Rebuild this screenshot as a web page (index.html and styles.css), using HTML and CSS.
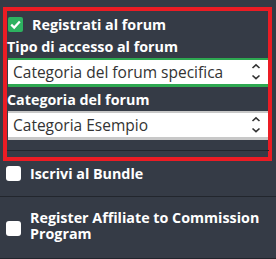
FILE: index.html
```html
<!DOCTYPE html>
<html>
<head>
	<title>Forum</title>
	<meta charset="utf-8">
	<link rel="stylesheet" href="styles.css">
</head>
<body>
	<div class="box">
		<div class="check-row first">
			<span class="check on">
				<svg width="15" height="15" viewBox="0 0 15 15"><path d="M3.2 7.6 L6.2 10.6 L11.8 4.4" fill="none" stroke="#fff" stroke-width="2.2"/></svg>
			</span>
			<span class="label">Registrati al forum</span>
		</div>
		<div class="field-label">Tipo di accesso al forum</div>
		<div class="select green">
			<span>Categoria del forum specifica</span>
			<svg class="arrows" width="10" height="18" viewBox="0 0 10 18"><path d="M1.5 5 L5 1.8 L8.5 5 M1.5 12.5 L5 15.7 L8.5 12.5" fill="none" stroke="#333" stroke-width="1.6"/></svg>
		</div>
		<div class="field-label">Categoria del forum</div>
		<div class="select grey">
			<span>Categoria Esempio</span>
			<svg class="arrows" width="10" height="18" viewBox="0 0 10 18"><path d="M1.5 5 L5 1.8 L8.5 5 M1.5 12.5 L5 15.7 L8.5 12.5" fill="none" stroke="#333" stroke-width="1.6"/></svg>
		</div>
		<div class="rule"></div>
	</div>
	<div class="option">
		<span class="check"></span>
		<span class="label">Iscrivi al Bundle</span>
	</div>
	<div class="option two">
		<span class="check"></span>
		<span class="label">Register Affiliate to Commission Program</span>
	</div>
</body>
</html>
```

FILE: styles.css
```css
	body{
		margin: 0;
		background: #353b46;
		font-family: "Open Sans", "Noto Sans", sans-serif;
		color: #fff;
	}
	.box{
		margin: 7px 4px 0 3px;
		border: 4px solid #ec1c24;
		padding: 0 0 6px 1px;
	}
	.check-row{
		display: flex;
		align-items: center;
		height: 19px;
		margin-top: 4px;
	}
	.check{
		display: inline-block;
		flex: none;
		width: 15px;
		height: 15px;
		border-radius: 3px;
		background: #fff;
	}
	.check.on{
		background: #2db260;
		border-radius: 2px;
	}
	.check svg{
		display: block;
	}
	.label{
		font-weight: bold;
		font-size: 14.3px;
		margin-left: 9px;
		line-height: 17px;
	}
	.field-label{
		font-weight: bold;
		font-size: 14.3px;
		margin-left: -1px;
		height: 22px;
		line-height: 22px;
		margin-top: 2px;
	}
	.select{
		display: flex;
		align-items: center;
		justify-content: space-between;
		background: #fff;
		color: #333;
		font-size: 15.5px;
		height: 24px;
		padding: 0 6px 0 5px;
		border-top: 2px solid #2ea851;
		border-bottom: 3px solid #2ea851;
	}
	.select.grey{
		border-color: #c8c8c8;
	}
	.arrows{
		flex: none;
		margin-right: 1px;
	}
	.rule{
		margin: 10px -1px 0 -1px;
		border-top: 1px solid #22262d;
	}
	.option{
		display: flex;
		align-items: flex-start;
		padding: 5px 6px 0;
		height: 30px;
		border-bottom: 1px solid #22262d;
	}
	.option .label{
		line-height: 16px;
	}
	.option.two{
		align-items: center;
		padding: 2px 6px 0;
		height: 59px;
	}
	.option.two .label{
		margin-bottom: 5px;
	}
```
